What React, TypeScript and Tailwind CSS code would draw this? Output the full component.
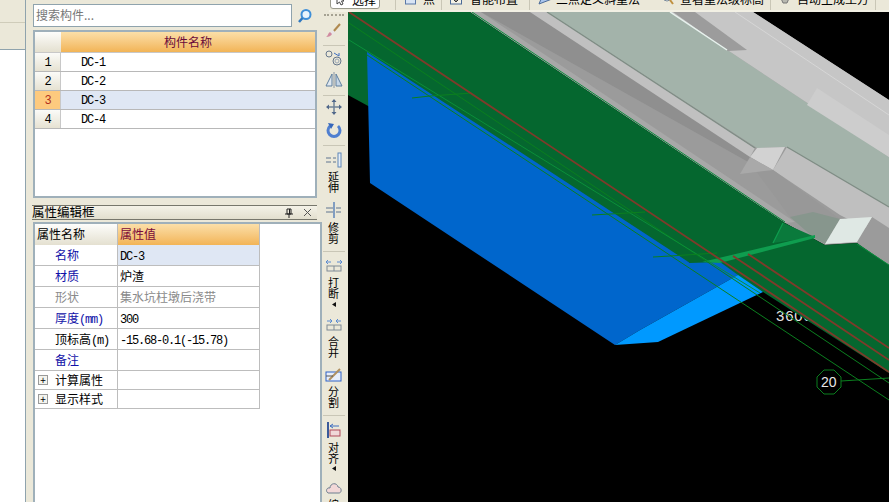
import type { ReactNode } from "react";

const cjk = "font-['Noto_Sans_CJK_SC',sans-serif]";
const mono = "font-['Liberation_Mono','Noto_Sans_CJK_SC',monospace] text-[12px] tracking-[-1.2px]";

const components = ["DC-1", "DC-2", "DC-3", "DC-4"];

interface Prop {
  label: ReactNode;
  value?: ReactNode;
  labelColor: string;
  selected?: boolean;
  muted?: boolean;
}

const props: Prop[] = [
  { label: "名称", value: <span className={mono}>DC-3</span>, labelColor: "text-[#1010a8]", selected: true },
  { label: "材质", value: "炉渣", labelColor: "text-[#1010a8]" },
  { label: "形状", value: "集水坑柱墩后浇带", labelColor: "text-[#8a8a8a]", muted: true },
  {
    label: (
      <>
        厚度<span className={mono}>(mm)</span>
      </>
    ),
    value: <span className={mono}>300</span>,
    labelColor: "text-[#1010a8]",
  },
  {
    label: (
      <>
        顶标高<span className={mono}>(m)</span>
      </>
    ),
    value: <span className={mono}>-15.68-0.1(-15.78)</span>,
    labelColor: "text-black",
  },
  { label: "备注", labelColor: "text-[#1010a8]" },
];

function Svg({ children }: { children: ReactNode }) {
  return (
    <svg width="18" height="16" viewBox="0 0 18 16" fill="none">
      {children}
    </svg>
  );
}

function VText({ text }: { text: string }) {
  return (
    <div className="flex flex-col items-center text-[11px] leading-[11px] text-black">
      {text.split("").map((c) => (
        <span key={c}>{c}</span>
      ))}
    </div>
  );
}

function Sep({ className }: { className: string }) {
  return <div className={`h-px w-[22px] shrink-0 bg-[#c9c6b6] ${className}`} />;
}

function Caret({ className }: { className: string }) {
  return (
    <svg width="4" height="5" viewBox="0 0 4 5" className={`shrink-0 ${className}`}>
      <path d="M4 0V5L0 2.5Z" fill="#111" />
    </svg>
  );
}

function Tool({ className, children }: { className: string; children: ReactNode }) {
  return <div className={`flex h-4 shrink-0 items-center justify-center ${className}`}>{children}</div>;
}

function SideToolbar() {
  return (
    <div className="flex h-full w-[26px] shrink-0 flex-col items-center overflow-hidden bg-[#ebe8d9] pr-[3px]">
      <div className="mt-[2px] h-[2px] w-[20px] shrink-0 border-t-2 border-dotted border-[#a5a293]" />
      <Tool className="mt-[7px]">
        <Svg>
          <path d="M15 1L8 9" stroke="#b08a50" strokeWidth="2" />
          <path d="M9 8L6 11" stroke="#e9e5e5" strokeWidth="4" />
          <path d="M1 14C4 14 6 13 7 11L5 9C3 10 3 13 1 14Z" fill="#d08aa0" />
        </Svg>
      </Tool>
      <Sep className="mt-[6px]" />
      <Tool className="mt-[4px]">
        <Svg>
          <circle cx="4" cy="4" r="3" stroke="#66778c" />
          <circle cx="12" cy="11" r="4" stroke="#66778c" />
          <circle cx="12" cy="11" r="2" stroke="#9aa7b5" />
          <path d="M9 3L14 6M14 6V3" stroke="#3f6fc0" />
        </Svg>
      </Tool>
      <Tool className="mt-[6px]">
        <Svg>
          <path d="M7 2V14H1Z" stroke="#5f7f9f" fill="#dfe8f0" />
          <path d="M11 2V14H17Z" stroke="#5f7f9f" fill="#c6d6e6" />
          <path d="M9 0V16" stroke="#8a96a4" />
        </Svg>
      </Tool>
      <Sep className="mt-[7px]" />
      <Tool className="mt-[3px]">
        <Svg>
          <path d="M9 1V15M2 8H16" stroke="#6f8298" strokeWidth="1.5" />
          <path d="M9 0L6.5 3H11.5ZM9 16L6.5 13H11.5ZM1 8L4 5.5V10.5ZM17 8L14 5.5V10.5Z" fill="#50678a" />
        </Svg>
      </Tool>
      <Tool className="mt-[7px]">
        <Svg>
          <path d="M5 4A6 6 0 1 0 13 4" stroke="#4f7fd0" strokeWidth="3" />
          <path d="M3 1L9 2L6 7Z" fill="#3566bb" />
        </Svg>
      </Tool>
      <Sep className="mt-[7px]" />
      <Tool className="mt-[6px]">
        <Svg>
          <path d="M1 6H6M1 10H6M8 6H11M8 10H11" stroke="#5f7590" />
          <rect x="13" y="1" width="3" height="14" stroke="#5f86b8" fill="#e6eef6" />
        </Svg>
      </Tool>
      <div className="mt-[3px] shrink-0">
        <VText text="延伸" />
      </div>
      <Tool className="mt-[9px]">
        <Svg>
          <path d="M1 6H8M1 10H8M11 6H16M11 10H16" stroke="#5f7590" />
          <path d="M9 0V16" stroke="#5f86b8" strokeWidth="1.5" />
        </Svg>
      </Tool>
      <div className="mt-1 shrink-0">
        <VText text="修剪" />
      </div>
      <Sep className="mt-[7px]" />
      <Tool className="mt-[5px]">
        <Svg>
          <path d="M1 5H6M3 3L1 5L3 7M17 5H12M15 3L17 5L15 7" stroke="#5a8ad0" />
          <rect x="2" y="9" width="14" height="5" stroke="#7f8a96" />
          <path d="M9 9V14" stroke="#7f8a96" />
        </Svg>
      </Tool>
      <div className="mt-1 shrink-0">
        <VText text="打断" />
      </div>
      <Caret className="mt-[3px]" />
      <Tool className="mt-[9px]">
        <Svg>
          <path d="M2 5H7M5 3L7 5L5 7M16 5H11M13 3L11 5L13 7" stroke="#5a8ad0" />
          <rect x="2" y="9" width="14" height="5" stroke="#7f8a96" />
          <path d="M9 9V14" stroke="#7f8a96" />
        </Svg>
      </Tool>
      <div className="mt-1 shrink-0">
        <VText text="合并" />
      </div>
      <Tool className="mt-[9px]">
        <Svg>
          <rect x="1" y="5" width="15" height="9" stroke="#2f62c8" fill="#e8eefa" />
          <path d="M4 13L15 2" stroke="#b09060" strokeWidth="2" />
          <path d="M1 9H8" stroke="#555" />
        </Svg>
      </Tool>
      <div className="mt-[3px] shrink-0">
        <VText text="分割" />
      </div>
      <Sep className="mt-[7px]" />
      <Tool className="mt-[6px]">
        <Svg>
          <path d="M3 0V16" stroke="#3a5a9a" strokeWidth="2" />
          <path d="M5 4H14M8 2L5 4L8 6" stroke="#3f6fc0" />
          <rect x="5" y="8" width="10" height="6" stroke="#b04a5a" fill="#f0d8d8" />
        </Svg>
      </Tool>
      <div className="mt-1 shrink-0">
        <VText text="对齐" />
      </div>
      <Caret className="mt-[2px]" />
      <Tool className="mt-[9px]">
        <Svg>
          <path d="M3 13C0 11 2 7 5 8C5 3 12 2 13 7C17 7 17 13 14 13Z" stroke="#6f7f90" fill="#f2d8d8" />
        </Svg>
      </Tool>
      <div className="mt-[3px] shrink-0 text-[11px] leading-[11px] text-black">编</div>
    </div>
  );
}

function TopItem({ icon, label, className }: { icon: ReactNode; label: string; className: string }) {
  return (
    <div className={`flex shrink-0 items-center ${className}`}>
      {icon}
      <span className="text-[12px] leading-[16px] whitespace-nowrap text-black">{label}</span>
    </div>
  );
}

function TopBar() {
  const sep = "h-full w-px shrink-0 bg-[#c9c6b6]";
  return (
    <div className="ml-[7px] flex h-[12px] shrink-0 items-start overflow-hidden border-b-2 border-[#f2f0e4] bg-[#ebe8d9]">
      <div className="-mt-[9px] ml-px flex h-[18px] w-[50px] shrink-0 items-center rounded-[3px] border border-[#9a9a8c] bg-white pl-[5px]">
        <svg width="9" height="12" viewBox="0 0 9 12" className="mr-[7px] shrink-0">
          <path d="M1 1V10L3.5 8L5 11L7 10L5.5 7H8Z" fill="#fff" stroke="#444" />
        </svg>
        <span className="text-[12px] whitespace-nowrap text-black">选择</span>
      </div>
      <div className={`${sep} ml-[15px]`} />
      <TopItem
        className="-mt-[9px] ml-[9px] gap-[7px]"
        label="点"
        icon={
          <svg width="11" height="12" viewBox="0 0 11 12">
            <rect x="0.5" y="1" width="10" height="10" fill="#d8e4f4" stroke="#5a78a8" />
          </svg>
        }
      />
      <div className={`${sep} ml-[6px]`} />
      <TopItem
        className="-mt-[9px] ml-2 gap-2"
        label="智能布置"
        icon={
          <svg width="12" height="12" viewBox="0 0 12 12">
            <rect x="0.5" y="1" width="11" height="10" fill="#f4f2e6" stroke="#4a6a98" />
            <path d="M6 3V9M4 7L6 9L8 7" stroke="#333" fill="none" />
          </svg>
        }
      />
      <div className={`${sep} ml-[11px]`} />
      <TopItem
        className="-mt-[9px] ml-2 gap-1"
        label="三点定义斜重法"
        icon={
          <svg width="14" height="12" viewBox="0 0 14 12">
            <path d="M1 11L5 1L14 6Z" fill="#a8c4ec" stroke="#4a6a98" />
          </svg>
        }
      />
      <TopItem
        className="-mt-[9px] ml-[22px] gap-[6px]"
        label="查看重法级标高"
        icon={
          <svg width="12" height="12" viewBox="0 0 12 12">
            <circle cx="5" cy="4" r="4" fill="#f0f4f8" stroke="#7a8a9a" />
            <path d="M8 7L11 11" stroke="#c09040" strokeWidth="2" />
          </svg>
        }
      />
      <div className={`${sep} ml-[6px]`} />
      <TopItem
        className="-mt-[9px] ml-2 gap-[6px]"
        label="自动生成土方"
        icon={
          <svg width="12" height="12" viewBox="0 0 12 12">
            <path d="M1 3H11L8 10H4Z" fill="#b8b8b0" stroke="#777" />
          </svg>
        }
      />
      <div className={`${sep} ml-[6px]`} />
    </div>
  );
}

function Scene() {
  return (
    <svg viewBox="348 12 541 490" className="block h-full w-full bg-black" preserveAspectRatio="none">
      <text x="776" y="321" fill="#e4e4e4" fontSize="15" letterSpacing="0.8" fontFamily="Liberation Sans, sans-serif">
        3600
      </text>

      <polygon points="470,12 753,12 889,100 889,270 857,243 825,245 785,223" fill="#9b9b9b" />
      <polygon points="470,12 481,12 795,222 785,223" fill="#a8a8a8" />
      <polygon points="481,12 530,12 757,160 750,163" fill="#8f8f8f" />
      <polygon points="530,12 547,12 755,148 750,157" fill="#c0c0c0" />
      <polygon points="547,12 670,12 889,157 889,207 787,147 757,148" fill="#a3b3aa" />
      <polygon points="670,12 753,12 889,100 889,157" fill="#c6c6c6" />
      <polygon points="673,12 695,12 747,50 728,51" fill="#9c9c9c" />
      <line x1="670" y1="12" x2="727" y2="50" stroke="#e8f2ee" strokeWidth="1.5" />
      <polygon points="807,105 817,88 889,135 889,157" fill="#cdcdcd" />
      <line x1="735" y1="12" x2="889" y2="115" stroke="#d6d6d6" />
      <polygon points="787,147 889,207 889,240 840,215 773,170" fill="#bfbfbf" />
      <polygon points="750,163 773,170 840,219 825,244 790,217" fill="#989898" />
      <polygon points="872,217 889,228 889,262 857,242" fill="#9b9b9b" />
      <line x1="547" y1="12" x2="755" y2="148" stroke="#7f8d85" strokeWidth="1.3" />
      <line x1="787" y1="147" x2="889" y2="207" stroke="#7f8d85" strokeWidth="1.3" />
      <polygon points="750,157 757,148 785,147 773,170" fill="#d2d2d2" />
      <polygon points="740,174 750,157 773,170" fill="#a9a9a9" />
      <polygon points="790,217 813,212 840,219 825,244 813,237" fill="#87968d" />
      <polygon points="825,244 840,219 872,217 857,242" fill="#dfe8e4" />

      <polygon
        points="348,12 470,12 785,223 825,245 857,243 889,265 889,373 763,292 690,263 370,107 348,95"
        fill="#05672f"
      />
      <line x1="472" y1="12" x2="785" y2="222" stroke="#0a8a3c" />
      <line x1="857" y1="244" x2="889" y2="265" stroke="#0a8a3c" />
      <polygon points="773,243 783,223 815,237" fill="#0a7a3c" />
      <line x1="783" y1="223" x2="773" y2="243" stroke="#0f9d4f" strokeWidth="1.2" />

      <polygon points="367,52 690,263 720,262 738,275 640,330 615,345 370,183" fill="#0066cc" />
      <polygon points="738,275 763,292 658,342 615,345 640,330" fill="#0099ff" />

      <polygon points="702,262 815,235 815,238 720,263" fill="#0f9d4f" />
      <line x1="349" y1="23" x2="889" y2="383" stroke="#0b7f1f" />
      <line x1="349" y1="40" x2="760" y2="293" stroke="#0b8f3a" />
      <line x1="367" y1="55" x2="889" y2="400" stroke="#0b7f1f" />
      <path d="M412 98L430 96L472 93M592 215L610 214L645 212M653 257L670 256L717 253" stroke="#0b7f1f" fill="none" />
      <line x1="349" y1="12" x2="889" y2="372" stroke="#803a2a" strokeWidth="1.8" />
      <line x1="733" y1="256" x2="889" y2="360" stroke="#803a2a" strokeWidth="1.8" />
      <line x1="748" y1="254" x2="889" y2="348" stroke="#803a2a" strokeWidth="1.8" />

      <polygon
        points="824,370 834,370 841,377 841,387 834,394 824,394 817,387 817,377"
        fill="#000"
        stroke="#0b7f1f"
      />
      <line x1="841" y1="381" x2="889" y2="378" stroke="#0b7f1f" />
      <text x="821" y="387" fill="#e8e8e8" fontSize="14" fontFamily="Liberation Sans, sans-serif">
        20
      </text>
    </svg>
  );
}

function ComponentTable() {
  return (
    <div className="mt-[3px] h-[168px] w-[284px] border-2 border-[#9fb0ba] bg-white text-[12px]">
      <div className="flex h-[21px] w-[280px] border-b border-[#c8c8c8]">
        <div className="w-[26px] bg-gradient-to-b from-[#fdfdfb] to-[#e4e0d0]" />
        <div className="flex-1 bg-gradient-to-b from-[#fbdfa8] to-[#f2b455] text-center leading-[20px] text-[#6a0a3a]">
          构件名称
        </div>
      </div>
      {components.map((name, i) => {
        const selected = i === 2;
        return (
          <div key={name} className="flex h-[19px] w-[280px] border-b border-[#b8b8b8]">
            <div
              className={`w-[26px] border-r border-[#c8c8c8] text-center leading-[20px] ${mono} ${
                selected ? "bg-[#fdca7e] text-[#b03020]" : "bg-gradient-to-b from-[#fbfbf8] to-[#e6e2d2] text-black"
              }`}
            >
              {i + 1}
            </div>
            <div className={`flex-1 pl-5 leading-[20px] ${mono} ${selected ? "bg-[#dfe7f4]" : ""}`}>{name}</div>
          </div>
        );
      })}
    </div>
  );
}

function PropTable() {
  const cell = "border-b border-[#bdbdbd]";
  return (
    <div className="mt-[2px] flex-1 border-2 border-b-0 border-[#9fb0ba] bg-white text-[12px]">
      <div className="w-[225px] border-r border-[#bdbdbd]">
        <div className="flex h-[21px]">
          <div className="w-[83px] border-r border-[#bdbdbd] bg-gradient-to-b from-[#fdfdfb] to-[#e4e0d0] pl-[2px] leading-[20px] text-black">
            属性名称
          </div>
          <div className="flex-1 bg-gradient-to-b from-[#fbdfa8] to-[#f2b455] pl-[2px] leading-[20px] text-[#7a0a3a]">
            属性值
          </div>
        </div>
        {props.map((p, i) => (
          <div key={i} className={`flex h-[21px] ${cell}`}>
            <div className={`w-[83px] border-r border-[#bdbdbd] pl-5 leading-[20px] whitespace-nowrap ${p.labelColor}`}>
              {p.label}
            </div>
            <div
              className={`flex-1 pl-[2px] leading-[20px] whitespace-nowrap ${
                p.selected ? "bg-[#dfe7f4]" : ""
              } ${p.muted ? "text-[#8a8a8a]" : "text-black"}`}
            >
              {p.value}
            </div>
          </div>
        ))}
        {["计算属性", "显示样式"].map((label) => (
          <div key={label} className={`flex h-[19px] ${cell}`}>
            <div className="flex w-[83px] items-center border-r border-[#bdbdbd] pl-[3px] text-black">
              <span className="mr-[7px] flex h-[10px] w-[10px] items-center justify-center border border-[#9a9a9a] bg-[#f4f4ee] text-[10px] leading-none">
                +
              </span>
              {label}
            </div>
          </div>
        ))}
      </div>
    </div>
  );
}

export default function App() {
  return (
    <div className={`flex h-[502px] w-[889px] overflow-hidden bg-[#ebe8d9] ${cjk}`}>
      {/* far left tabs */}
      <div className="flex w-[26px] shrink-0 flex-col border-r border-[#8fa3ad]">
        <div className="h-[23px] border-b border-[#cfccba] bg-[#ebe8d9]" />
        <div className="h-[27px] border-b border-[#8fa3ad] bg-[#ebe8d9]" />
        <div className="flex-1 bg-white" />
      </div>

      {/* component list and property panel */}
      <div className="flex w-[296px] shrink-0 flex-col pl-[7px]">
        <div className="flex h-[27px] w-[289px] items-end border-t-[3px] border-t-[#ebe8d9]">
          <div className="mb-0 h-[23px] w-[259px] border border-[#8fa3ad] bg-white pl-[2px] text-[12px] leading-[20px] text-[#777]">
            搜索构件...
          </div>
          <div className="flex h-[23px] flex-1 items-center justify-center pr-1">
            <svg width="16" height="16" viewBox="0 0 16 16" fill="none">
              <circle cx="9" cy="6.5" r="4.5" stroke="#3f8fd8" strokeWidth="2" fill="#e8f4fc" />
              <path d="M5.5 10L2 14" stroke="#2f78c0" strokeWidth="2.5" />
            </svg>
          </div>
        </div>
        <ComponentTable />
        <div className="mt-[7px] flex h-[15px] w-[285px] -translate-x-px items-center justify-between border-y border-[#77776c] bg-gradient-to-b from-[#f4f2e8] to-[#e2dfce] text-[12.5px] leading-none text-black">
          <span>属性编辑框</span>
          <div className="flex items-center gap-[10px] pr-[5px]">
            <svg width="8" height="10" viewBox="0 0 8 10">
              <path d="M2 1H6V6H2ZM0 6H8M4 6V10" fill="none" stroke="#222" />
              <path d="M4.5 1V6" stroke="#222" />
            </svg>
            <svg width="9" height="9" viewBox="0 0 9 9">
              <path d="M1 1L8 8M8 1L1 8" stroke="#555" />
            </svg>
          </div>
        </div>
        <PropTable />
      </div>

      {/* top toolbar, then vertical toolbar + main view */}
      <div className="flex min-w-0 flex-1 flex-col">
        <TopBar />
        <div className="flex min-h-0 flex-1">
          <SideToolbar />
          <div className="min-w-0 flex-1">
            <Scene />
          </div>
        </div>
      </div>
    </div>
  );
}
